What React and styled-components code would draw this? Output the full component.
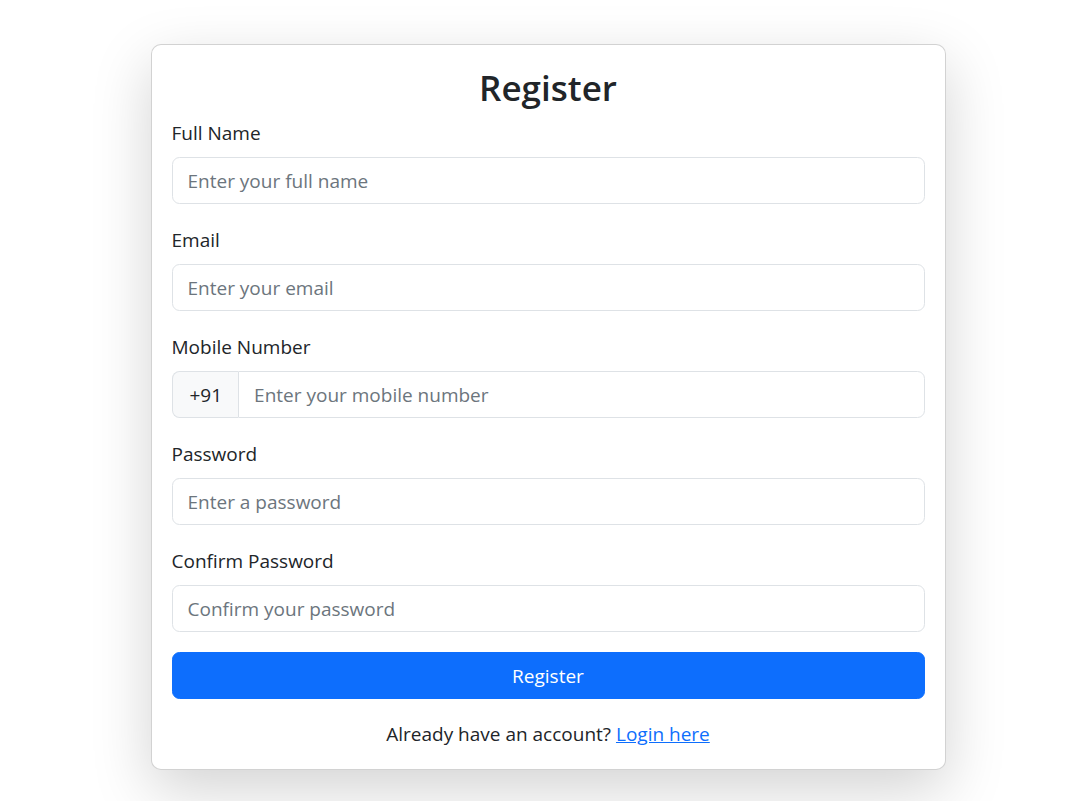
import styled, { createGlobalStyle } from "styled-components";

const GlobalStyle = createGlobalStyle`
  * { box-sizing: border-box; }
  body {
    margin: 0;
    background: #fff;
    color: #212529;
    font-family: "Open Sans", "Noto Sans", sans-serif;
  }
`;

const Page = styled.div`
  display: flex;
  justify-content: center;
  padding: 44px 0 40px 5px;
`;

const Card = styled.div`
  width: 795px;
  background: #fff;
  border: 1px solid rgba(0, 0, 0, 0.175);
  border-radius: 10px;
  box-shadow: 0 20px 60px rgba(0, 0, 0, 0.175);
  padding: 20px;
`;

const Title = styled.h3`
  margin: 2px 0 8px;
  font-size: 35px;
  line-height: 42px;
  font-weight: 600;
  text-align: center;
`;

const Group = styled.div`
  margin-bottom: 20px;
`;

const Label = styled.label`
  display: block;
  font-size: 19px;
  line-height: 30px;
  padding-top: 1px;
  margin-bottom: 9px;
`;

const Input = styled.input`
  display: block;
  width: 100%;
  height: 47px;
  padding: 1px 15px 0;
  font: inherit;
  font-size: 19px;
  color: #212529;
  border: 1px solid #dee2e6;
  border-radius: ${p => (p.$joined ? "0 7.5px 7.5px 0" : "7.5px")};
  outline: none;
  &::placeholder { color: #6c757d; }
`;

const InputGroup = styled.div`
  display: flex;
`;

const Prefix = styled.span`
  display: flex;
  align-items: center;
  padding: 1px 16px 0 17px;
  height: 47px;
  font-size: 19px;
  background: #f8f9fa;
  border: 1px solid #dee2e6;
  border-right: 0;
  border-radius: 7.5px 0 0 7.5px;
  flex-shrink: 0;
`;

const Button = styled.button`
  display: block;
  width: 100%;
  height: 47px;
  padding-top: 1px;
  font: inherit;
  font-size: 19px;
  color: #fff;
  background: #0d6efd;
  border: 1px solid #0d6efd;
  border-radius: 7.5px;
  cursor: pointer;
`;

const Footer = styled.p`
  margin: 21px 0 0;
  text-align: center;
  font-size: 19px;
  line-height: 29px;
  a { color: #0d6efd; }
`;

const fields = [
  { label: "Full Name", placeholder: "Enter your full name", type: "text" },
  { label: "Email", placeholder: "Enter your email", type: "email" },
  { label: "Mobile Number", placeholder: "Enter your mobile number", type: "tel", prefix: "+91" },
  { label: "Password", placeholder: "Enter a password", type: "password" },
  { label: "Confirm Password", placeholder: "Confirm your password", type: "password" },
];

export default function App() {
  return (
    <>
      <GlobalStyle />
      <Page>
        <Card>
          <Title>Register</Title>
          <form onSubmit={e => e.preventDefault()}>
            {fields.map(f => (
              <Group key={f.label}>
                <Label>{f.label}</Label>
                {f.prefix ? (
                  <InputGroup>
                    <Prefix>{f.prefix}</Prefix>
                    <Input $joined type={f.type} placeholder={f.placeholder} />
                  </InputGroup>
                ) : (
                  <Input type={f.type} placeholder={f.placeholder} />
                )}
              </Group>
            ))}
            <Button type="submit">Register</Button>
          </form>
          <Footer>
            Already have an account? <a href="#">Login here</a>
          </Footer>
        </Card>
      </Page>
    </>
  );
}
